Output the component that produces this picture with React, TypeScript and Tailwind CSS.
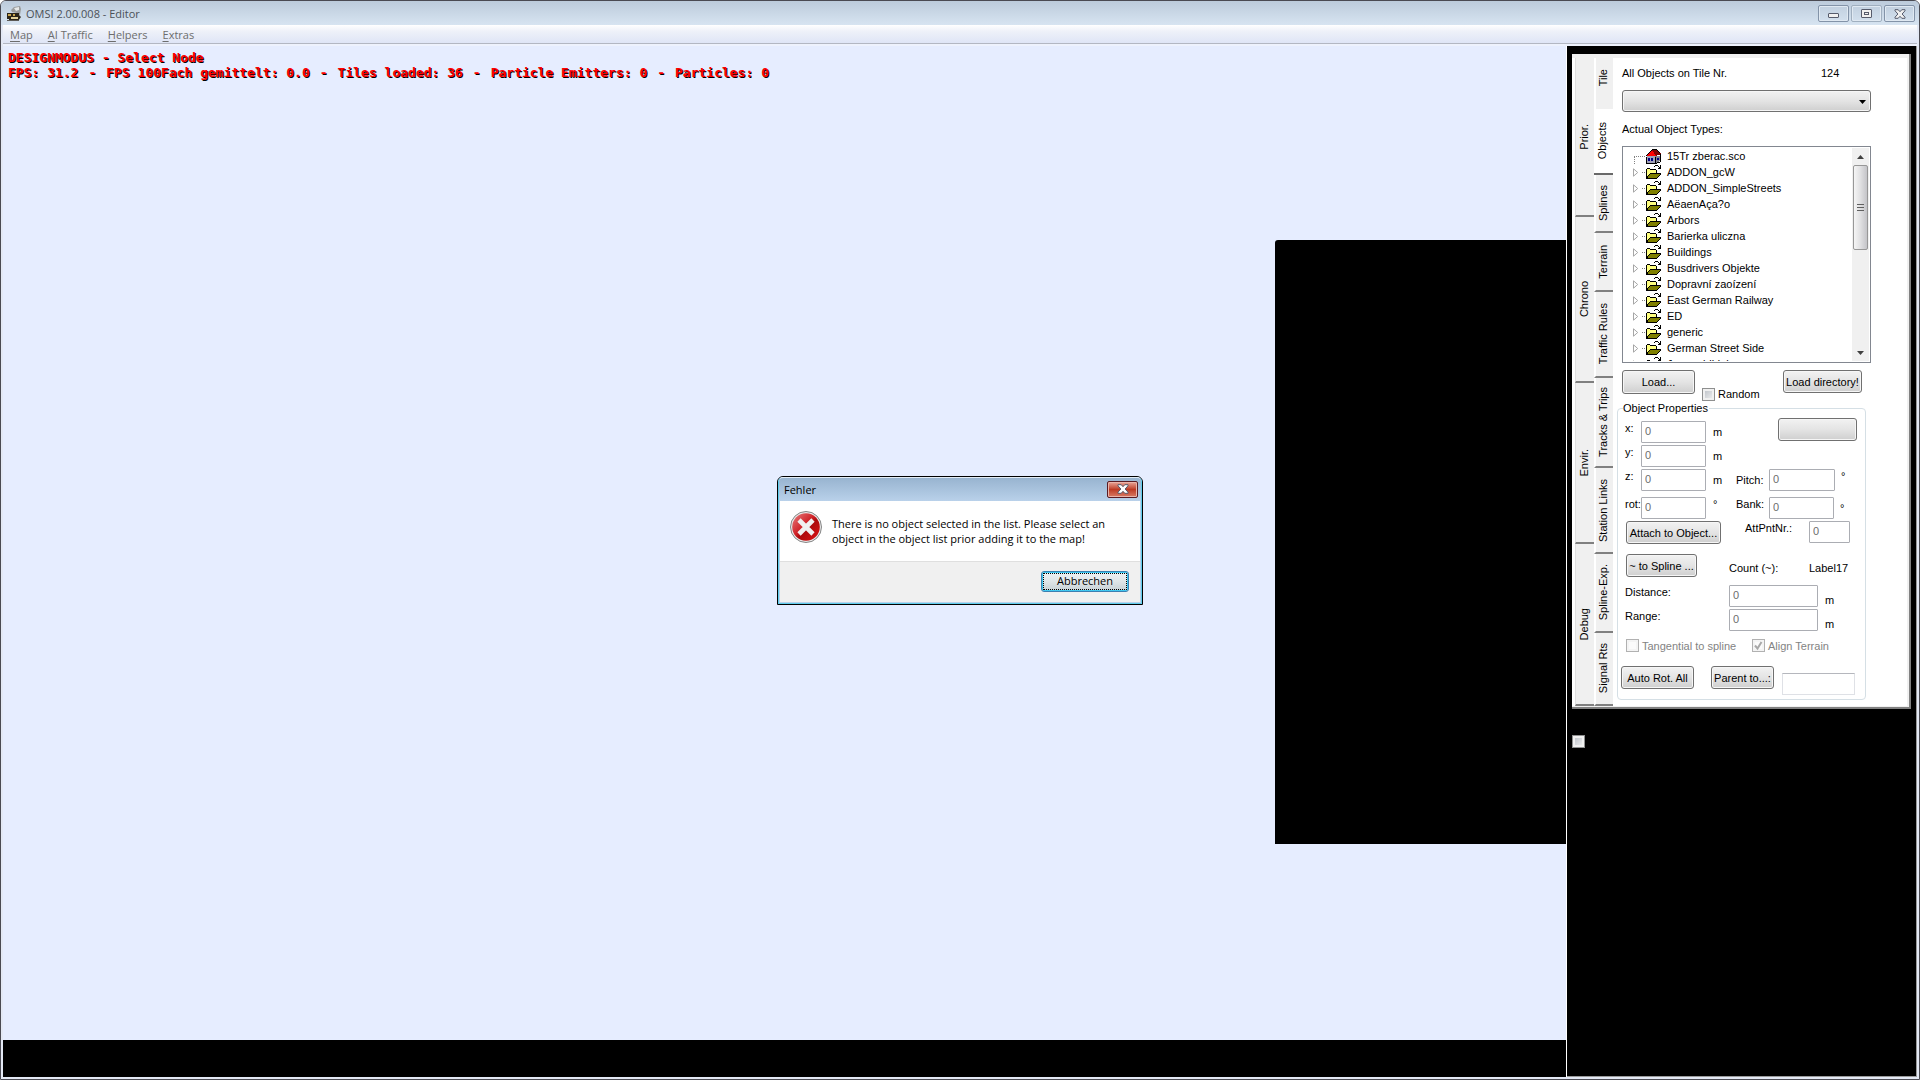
import React, { useState } from 'react';

const menuItems = ['Map', 'AI Traffic', 'Helpers', 'Extras'];

const stats = ['FPS: 31.2', 'FPS 100Fach gemittelt: 0.0', 'Tiles loaded: 36', 'Particle Emitters: 0', 'Particles: 0'];

const outerTabs = [
    { label: 'Prior.', grow: 'grow-[159]' },
    { label: 'Chrono', grow: 'grow-[167]' },
    { label: 'Envir.', grow: 'grow-[161]' },
    { label: 'Debug', grow: 'grow-[162]' },
];

const innerTabs = [
    { label: 'Tile', height: 'h-[51px] pb-3' },
    { label: 'Objects', height: 'h-[66px]' },
    { label: 'Splines', height: 'h-[58px]' },
    { label: 'Terrain', height: 'h-[59px]' },
    { label: 'Traffic Rules', height: 'h-[86px]' },
    { label: 'Tracks & Trips', height: 'h-[90px]' },
    { label: 'Station Links', height: 'h-[86px]' },
    { label: 'Spline-Exp.', height: 'h-[79px]' },
    { label: 'Signal Rts', height: 'h-[73px]' },
];

const folders = [
    'ADDON_gcW',
    'ADDON_SimpleStreets',
    'AëaenAça?o',
    'Arbors',
    'Barierka uliczna',
    'Buildings',
    'Busdrivers Objekte',
    'Dopravní zaoízení',
    'East German Railway',
    'ED',
    'generic',
    'German Street Side',
    'Joerns bildei',
];

const AppIcon = () => (
    <svg width="16" height="16" viewBox="0 0 16 16" aria-hidden="true">
        <path d="M5 4 L8 1 L14 0 L15 3 L14 9 L11 7 L6 6 Z" fill="#9a9c9c" />
        <path d="M8 2 L13 1 L13 4 L10 5 Z" fill="#e6e8e8" />
        <path d="M1 7 H13 V9 L15 11 L12 15 H3 V13 H1 Z" fill="#2c2519" />
        <path d="M2 8 H5 V10 H2 Z M7 8 H9 V10 H7 Z" fill="#c9a64e" />
        <path d="M5 11 H12 V13 H5 Z" fill="#e3d29a" />
        <path d="M1 14 H13 V15 H1 Z" fill="#5c5a55" />
    </svg>
);

const FolderIcon = () => (
    <svg width="17" height="15" viewBox="0 0 17 15" shapeRendering="crispEdges" aria-hidden="true">
        <path d="M1 5 H2 V4 H5 V5 H11 V8 H5 L1 13 Z" fill="#ffff80" />
        <path d="M5 8 H16 L12 13 H1 Z" fill="#808000" />
        <path
            d="M1 4h1v9h-1z M2 3h3v1h-3z M5 4h6v1h-6z M11 5h1v3h-1z M5 8h11v1h-11z M4 9h1v1h-1z M3 10h1v1h-1z M2 11h1v2h-1z M15 9h1v1h-1z M14 10h1v1h-1z M13 11h1v1h-1z M12 12h1v1h-1z M1 13h11v1h-11z M9 1h1v1h-1z M10 0h3v1h-3z M13 1h1v1h-1z M14 2h1v1h-1z M15 0h1v3h-1z M13 3h3v1h-3z"
            fill="#000"
        />
    </svg>
);

const HouseIcon = () => (
    <svg width="17" height="15" viewBox="0 0 17 15" shapeRendering="crispEdges" aria-hidden="true">
        <path d="M2 7 H10 V14 H2 Z" fill="#a0a0b8" />
        <path d="M10 7 H15 V12 L11 14 H10 Z" fill="#808090" />
        <path d="M1 7 L7 1 L11 7 Z" fill="#ff0000" />
        <path d="M7 1 L12 0 L16 5 L11 7 Z" fill="#800000" />
        <path d="M3 9h2v3h-2z M6 9h2v3h-2z M12 9h2v2h-2z" fill="#000080" />
        <path
            d="M6 1h1v1h-1z M7 0h5v1h-5z M5 2h1v1h-1z M4 3h1v1h-1z M3 4h1v1h-1z M2 5h1v1h-1z M1 6h1v1h-1z M1 8h1v6h-1z M1 14h11v1h-11z M10 8h1v6h-1z M15 5h1v8h-1z M12 13h3v1h-3z M12 1h1v1h-1z M13 2h1v1h-1z M14 3h1v1h-1z"
            fill="#000"
        />
    </svg>
);

const CrossGlyph = ({ fill }: { fill: string }) => (
    <svg width="12" height="10" viewBox="0 0 12 10" aria-hidden="true">
        <path
            d="M1 .7 H4.2 L6 2.7 L7.8 .7 H11 V1.8 L8.1 5 L11 8.2 V9.3 H7.8 L6 7.3 L4.2 9.3 H1 V8.2 L3.9 5 L1 1.8 Z"
            fill={fill}
            stroke="#555a6b"
            strokeWidth="1"
        />
    </svg>
);

const ErrorIcon = () => (
    <svg width="32" height="32" viewBox="0 0 32 32" aria-hidden="true" className="shrink-0">
        <defs>
            <linearGradient id="errorFill" x1="0" y1="0" x2="1" y2="1">
                <stop offset="0" stopColor="#e88080" />
                <stop offset="0.45" stopColor="#cf2026" />
                <stop offset="0.55" stopColor="#ab0a0c" />
                <stop offset="1" stopColor="#e01414" />
            </linearGradient>
        </defs>
        <circle cx="16" cy="16" r="15.5" fill="#e9e9e9" stroke="#858585" />
        <circle cx="16" cy="16" r="13.8" fill="url(#errorFill)" />
        <path d="M9 9 L23 23 M23 9 L9 23" stroke="#f0f0f0" strokeWidth="4.6" />
    </svg>
);

const PushButton = ({ children, label, className = '' }: { children?: React.ReactNode; label?: string; className?: string }) => (
    <button
        aria-label={label}
        className={`shrink-0 whitespace-nowrap rounded-[3px] border border-[#707070] bg-linear-to-b from-[#f2f2f2] via-[#e4e4e4] to-[#cfcfcf] text-center leading-[14px] shadow-[inset_0_0_0_1px_#f6f6f6] ${className}`}
    >
        {children}
    </button>
);

const NumberBox = ({ label, className = '' }: { label: string; className?: string }) => (
    <input
        type="text"
        aria-label={label}
        defaultValue="0"
        className={`h-[22px] shrink-0 rounded-[1px] border border-[#abadb3] bg-white px-[3px] pb-[2px] text-[#6d6d6d] outline-none ${className}`}
    />
);

const CheckBox = ({ id, disabled, initial = false }: { id: string; disabled?: boolean; initial?: boolean }) => {
    const [checked, setChecked] = useState(initial);
    const enabledStyle = 'border-[#8e8f8f] bg-linear-to-br from-[#b8bdc4] to-[#f4f4f4] shadow-[inset_0_0_0_2px_#f0f0f0]';
    const disabledStyle = 'border-[#b1b1b1] bg-[#fbfbfb] shadow-[inset_0_0_0_2px_#f4f4f4]';

    return (
        <span className="relative block size-[13px] shrink-0">
            <input
                id={id}
                type="checkbox"
                aria-label={id}
                disabled={disabled}
                checked={checked}
                onChange={(e) => setChecked(e.target.checked)}
                className={`block size-[13px] appearance-none border ${disabled ? disabledStyle : enabledStyle}`}
            />
            {checked && (
                <svg className="pointer-events-none absolute inset-0" width="13" height="13" viewBox="0 0 13 13">
                    <path d="M3 6.5 L5.5 9.5 L9.5 3" fill="none" stroke="#a8a8a8" strokeWidth="2" />
                </svg>
            )}
        </span>
    );
};

const TitleBar = () => (
    <header className="flex h-6 items-start bg-linear-to-b from-[#bccbdb] to-[#d7e4f1] pl-[5px] pr-1">
        <div className="flex grow items-center gap-1 pt-1">
            <AppIcon />
            <h1 className="font-['Open_Sans',sans-serif] text-[11px] leading-[18px] text-[#4b5158]">OMSI 2.00.008 - Editor</h1>
        </div>
        <div className="flex gap-[2px] pt-1">
            <button aria-label="Minimize" className="flex h-[17px] w-[31px] items-center justify-center rounded-[2px] border border-[#8393a8] shadow-[inset_0_0_0_1px_#e0e9f2]">
                <span className="mt-1 h-[5px] w-[11px] rounded-[1px] border border-[#565b6b] bg-[#f0f0f0]" />
            </button>
            <button aria-label="Maximize" className="flex h-[17px] w-[31px] items-center justify-center rounded-[2px] border border-[#a0afbf] shadow-[inset_0_0_0_1px_#e0e9f2]">
                <span className="flex h-[9px] w-[11px] items-center justify-center rounded-[1px] border border-[#565b6b] bg-[#f0f0f0]">
                    <span className="h-[3px] w-[5px] border border-[#565b6b]" />
                </span>
            </button>
            <button aria-label="Close" className="flex h-[17px] w-[31px] items-center justify-center rounded-[2px] border border-[#8393a8] shadow-[inset_0_0_0_1px_#e0e9f2]">
                <CrossGlyph fill="#f0f0f0" />
            </button>
        </div>
    </header>
);

const MenuBar = () => (
    <nav className="mx-[2px] flex h-[19px] items-center gap-[15px] border-b border-[#b3b7c2] bg-linear-to-b from-white from-0% via-[#eef1f9] via-35% to-[#dfe5f6] pl-[7px] pt-[2px] font-['Open_Sans',sans-serif] text-[11px] leading-4 text-[#6d6d6d]">
        {menuItems.map((item) => (
            <button key={item}>
                <span className="underline underline-offset-2">{item[0]}</span>
                {item.slice(1)}
            </button>
        ))}
    </nav>
);

const Viewport = () => (
    <main className="flex grow flex-col border-r border-white bg-[#e6edff]">
        <div className="h-[194px] pl-[5px] pt-1 font-['DejaVu_Sans_Mono',monospace] text-[13px] font-bold leading-[15px] text-[#ff0000] [text-shadow:1px_1px_0_#000]">
            <p>DESIGNMODUS - Select Node</p>
            <p className="flex gap-[10px] whitespace-nowrap">
                {stats.map((stat, i) => (
                    <React.Fragment key={stat}>
                        {i > 0 && <span>-</span>}
                        <span>{stat}</span>
                    </React.Fragment>
                ))}
            </p>
        </div>
        <div className="h-[604px] w-[291px] self-end rounded-tl-[3px] bg-black" />
        <div className="grow" />
        <div className="h-[37px] bg-black" />
    </main>
);

const ObjectTree = () => (
    <div className="flex h-[217px] w-[249px] border border-[#828790] bg-white p-px">
        <ul className="grow overflow-hidden">
            <li className="flex h-4 items-center pl-[9px]">
                <span className="ml-px mt-2 h-2 w-[11px] border-l border-t border-dotted border-[#808080]" />
                <HouseIcon />
                <span className="ml-[5px]">15Tr zberac.sco</span>
            </li>
            {folders.map((name) => (
                <li key={name} className="flex h-4 items-center pl-[9px]">
                    <svg width="6" height="9" viewBox="0 0 6 9" aria-hidden="true">
                        <path d="M.5 .8 L4.7 4.5 L.5 8.2 Z" fill="#fff" stroke="#a6a6a6" />
                    </svg>
                    <span className="ml-[3px] w-[3px] border-t border-dotted border-[#808080]" />
                    <FolderIcon />
                    <span className="ml-[5px] whitespace-nowrap">{name}</span>
                </li>
            ))}
        </ul>
        <div className="flex w-[17px] flex-col items-center bg-[#f0f0f0]">
            <button aria-label="Scroll up" className="flex h-[17px] items-center">
                <svg width="7" height="4" viewBox="0 0 7 4"><path d="M0 4 L3.5 0 L7 4 Z" fill="#404040" /></svg>
            </button>
            <div className="flex h-[85px] w-[15px] flex-col items-center justify-center gap-[2px] rounded-[2px] border border-[#979797] bg-linear-to-r from-[#f5f5f5] via-[#e0e0e2] to-[#c4c4c8]">
                <span className="h-px w-[7px] bg-[#606060]" />
                <span className="h-px w-[7px] bg-[#606060]" />
                <span className="h-px w-[7px] bg-[#606060]" />
            </div>
            <button aria-label="Scroll down" className="mt-auto flex h-[17px] items-center">
                <svg width="7" height="4" viewBox="0 0 7 4"><path d="M0 0 L3.5 4 L7 0 Z" fill="#404040" /></svg>
            </button>
        </div>
    </div>
);

const ObjectProperties = () => (
    <fieldset className="-ml-[5px] w-[249px] rounded-[4px] border border-[#d5dfe5] pb-1 pl-[7px] leading-[14px]">
        <legend className="-ml-[2px] pr-px">Object Properties</legend>
        <div className="mb-[6px] flex h-6 items-start pt-[6px]">
            <span className="w-4">x:</span>
            <NumberBox label="x" className="w-[65px]" />
            <span className="ml-[7px] mt-1 w-[65px]">m</span>
            <PushButton label="Object name" className="-mt-[3px] h-[23px] w-[79px]" />
        </div>
        <div className="flex h-6 items-start">
            <span className="w-4">y:</span>
            <NumberBox label="y" className="w-[65px]" />
            <span className="ml-[7px] mt-1">m</span>
        </div>
        <div className="flex h-7 items-start">
            <span className="w-4">z:</span>
            <NumberBox label="z" className="w-[65px]" />
            <span className="ml-[7px] mt-1 w-[23px]">m</span>
            <span className="mt-1 w-[33px]">Pitch:</span>
            <NumberBox label="Pitch" className="w-[66px]" />
            <span className="ml-[6px]">°</span>
        </div>
        <div className="flex h-6 items-start">
            <span className="w-4">rot:</span>
            <NumberBox label="rot" className="w-[65px]" />
            <span className="ml-[7px] w-[23px]">°</span>
            <span className="w-[33px]">Bank:</span>
            <NumberBox label="Bank" className="w-[65px]" />
            <span className="ml-[6px] mt-1">°</span>
        </div>
        <div className="flex h-[33px] items-start">
            <PushButton className="ml-px h-[23px] w-[95px]">Attach to Object...</PushButton>
            <span className="ml-6 w-16">AttPntNr.:</span>
            <NumberBox label="AttPntNr." className="w-[41px]" />
        </div>
        <div className="flex h-[31px] items-start">
            <PushButton className="ml-px h-[23px] w-[71px]">~ to Spline ...</PushButton>
            <span className="ml-8 mt-[7px] w-20">Count (~):</span>
            <span className="mt-[7px]">Label17</span>
        </div>
        <div className="flex h-6 items-start">
            <span className="w-[104px]">Distance:</span>
            <NumberBox label="Distance" className="w-[89px]" />
            <span className="ml-[7px] mt-2">m</span>
        </div>
        <div className="flex h-[30px] items-start">
            <span className="w-[104px]">Range:</span>
            <NumberBox label="Range" className="w-[89px]" />
            <span className="ml-[7px] mt-2">m</span>
        </div>
        <div className="flex h-[27px] items-start pl-px text-[#838383]">
            <CheckBox id="tangential" disabled />
            <label htmlFor="tangential" className="ml-[3px] w-[110px]">Tangential to spline</label>
            <CheckBox id="align" disabled initial />
            <label htmlFor="align" className="ml-[3px]">Align Terrain</label>
        </div>
        <div className="-ml-1 flex items-start">
            <PushButton className="h-[23px] w-[73px]">Auto Rot. All</PushButton>
            <PushButton className="ml-[17px] h-[23px] w-[63px]">Parent to...:</PushButton>
            <input
                type="text"
                aria-label="Parent"
                className="ml-2 mt-[7px] h-[22px] w-[73px] border border-[#dfe1e6] border-t-[#b5b7bd] bg-white px-1"
            />
        </div>
    </fieldset>
);

const ObjectsPage = () => (
    <section className="grow bg-white pl-[9px] pt-2">
        <p className="flex leading-[14px]">
            <span className="w-[199px]">All Objects on Tile Nr.</span>
            <span>124</span>
        </p>
        <div className="relative mt-[10px] w-[249px]">
            <select
                aria-label="All objects on tile"
                className="block h-[22px] w-full appearance-none rounded-[3px] border border-[#707070] bg-linear-to-b from-[#f2f2f2] via-[#e4e4e4] to-[#cfcfcf] shadow-[inset_0_0_0_1px_#f6f6f6]"
            >
                <option value="" />
            </select>
            <svg className="pointer-events-none absolute right-[5px] top-[10px]" width="7" height="4" viewBox="0 0 7 4">
                <path d="M0 0 H7 L3.5 4 Z" fill="#000" />
            </svg>
        </div>
        <p className="mb-[10px] mt-[10px] leading-[14px]">Actual Object Types:</p>
        <ObjectTree />
        <div className="mt-[7px] flex h-[31px] w-60 items-start">
            <PushButton className="h-6 w-[73px]">Load...</PushButton>
            <div className="ml-[7px] mt-[17px] flex grow items-center gap-[3px]">
                <CheckBox id="random" />
                <label htmlFor="random" className="leading-[14px]">Random</label>
            </div>
            <PushButton className="h-[23px] w-[79px]">Load directory!</PushButton>
        </div>
        <ObjectProperties />
    </section>
);

const SidePanel = () => {
    const [active, setActive] = useState('Objects');

    return (
        <aside className="w-[350px] shrink-0 border-b border-r border-[#9a9a9a] bg-black px-[5px] pt-2 font-['Liberation_Sans',Arial,sans-serif] text-[11px] text-black">
            <div className="flex h-[655px] border-b-2 border-r-2 border-[#808080] bg-[#f0f0f0] pb-px pr-[2px] pt-1">
                <div className="flex w-[22px] flex-col border-l-[3px] border-white">
                    {outerTabs.map((tab) => (
                        <button
                            key={tab.label}
                            className={`flex basis-0 items-center justify-center border-b-2 border-l border-l-[#e0e0e0] border-b-[#808080] pr-[2px] ${tab.grow}`}
                        >
                            <span className="rotate-180 [writing-mode:vertical-rl]">{tab.label}</span>
                        </button>
                    ))}
                </div>
                <div className="flex w-[19px] flex-col">
                    {innerTabs.map((tab) => (
                        <button
                            key={tab.label}
                            onClick={() => setActive(tab.label)}
                            className={`flex shrink-0 items-center justify-center pr-[2px] ${tab.height} ${
                                tab.label === active
                                    ? 'border-b-2 border-b-[#696969] bg-white'
                                    : tab.label === 'Tile'
                                        ? 'border-l-2 border-l-white'
                                        : 'border-b-2 border-l-2 border-l-white border-b-[#808080]'
                            }`}
                        >
                            <span className="rotate-180 whitespace-nowrap [writing-mode:vertical-rl]">{tab.label}</span>
                        </button>
                    ))}
                </div>
                <ObjectsPage />
            </div>
            <div className="mt-[26px]">
                <CheckBox id="panel-toggle" />
            </div>
        </aside>
    );
};

const ErrorDialog = () => (
    <div className="absolute inset-0 flex items-center justify-center">
        <div
            role="alertdialog"
            aria-labelledby="dialog-title"
            className="w-[366px] rounded-t-[6px] border border-black bg-[#b5cde6] font-['Open_Sans',sans-serif] text-[11px] text-black"
        >
            <div className="rounded-t-[5px] border border-[#5fcdec] border-t-[#e4eef7] bg-[#b9d1ea]">
                <div className="flex h-[23px] items-start justify-between rounded-t-[4px] bg-linear-to-b from-[#98b4d0] to-[#b9d1ea] pl-[5px] pr-[3px] pt-[3px]">
                    <h2 id="dialog-title" className="leading-[18px]">Fehler</h2>
                    <button
                        aria-label="Close dialog"
                        className="flex h-[17px] w-[31px] items-center justify-center rounded-[2px] border border-[#5a1b22] bg-linear-to-b from-[#e8a598] from-0% via-[#bd3a23] via-50% to-[#d87a64] shadow-[inset_0_0_0_1px_#e9b4aa]"
                    >
                        <CrossGlyph fill="#fff" />
                    </button>
                </div>
                <div className="mx-px mb-px">
                    <div className="flex h-[60px] items-start bg-white pl-[10px] pt-[10px]">
                        <ErrorIcon />
                        <p className="ml-[10px] mt-[5px] whitespace-nowrap leading-[15px]">
                            There is no object selected in the list. Please select an
                            <br />
                            object in the object list prior adding it to the map!
                        </p>
                    </div>
                    <div className="flex h-[41px] items-start justify-end border-t border-[#dfdfdf] bg-[#f0f0f0] pr-[11px] pt-[9px]">
                        <button className="h-[21px] w-[88px] rounded-[3px] border border-[#3c7fb1] bg-linear-to-b from-[#eef2f4] via-[#dfe5e8] to-[#c6d0d5] p-px shadow-[inset_0_0_0_1px_#3fc8f0]">
                            <span className="flex h-[17px] items-center justify-center border border-dotted border-black leading-4">Abbrechen</span>
                        </button>
                    </div>
                </div>
            </div>
        </div>
    </div>
);

const App = () => (
    <div className="relative flex min-h-screen flex-col overflow-hidden rounded-t-[6px] border border-[#4a4a52] bg-[#e4e9f5]">
        <TitleBar />
        <MenuBar />
        <div className="mx-[2px] mb-[2px] flex grow border-t-2 border-[#eef2fd]">
            <Viewport />
            <SidePanel />
        </div>
        <ErrorDialog />
    </div>
);

export default App;
